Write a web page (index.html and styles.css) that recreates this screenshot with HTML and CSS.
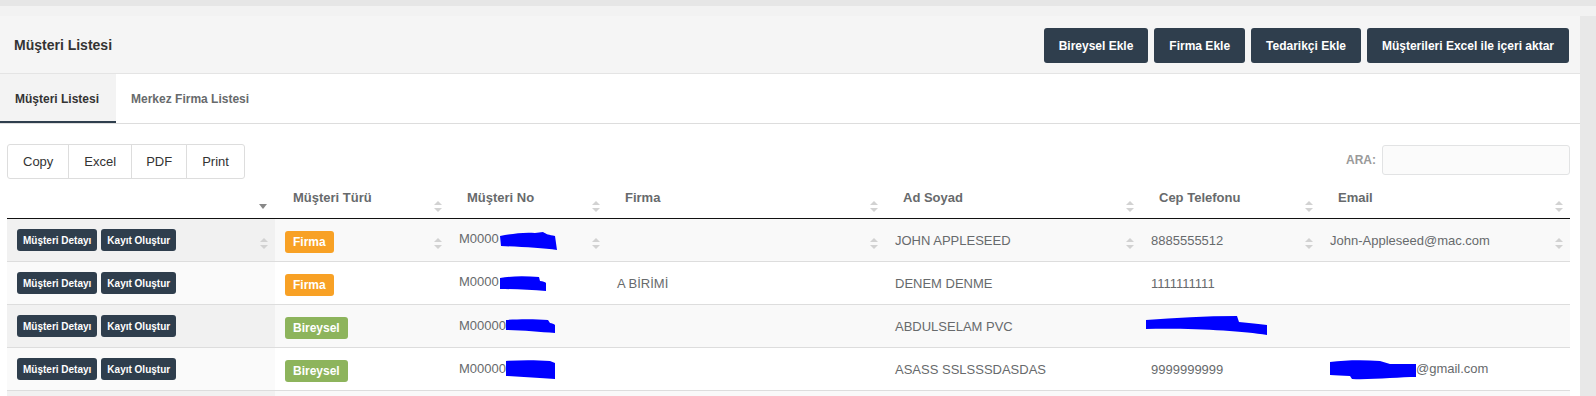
FILE: index.html
```html
<!DOCTYPE html>
<html lang="tr">
<head>
  <meta charset="UTF-8">
  <title>Müşteri Listesi</title>
  <link rel="stylesheet" href="styles.css">
</head>
<body>
  <div class="topbar"></div>
  <div class="page">
    <div class="panel-head">
      <h5 class="panel-title">Müşteri Listesi</h5>
      <div class="head-actions">
        <button class="btn-dark">Bireysel Ekle</button>
        <button class="btn-dark">Firma Ekle</button>
        <button class="btn-dark">Tedarikçi Ekle</button>
        <button class="btn-dark">Müşterileri Excel ile içeri aktar</button>
      </div>
    </div>

    <!-- sekmeler -->
    <div class="tabs">
      <a class="tab active">Müşteri Listesi</a>
      <a class="tab">Merkez Firma Listesi</a>
    </div>

    <div class="content">
      <div class="tools">
        <div class="export-group">
          <button class="btn-export">Copy</button>
          <button class="btn-export">Excel</button>
          <button class="btn-export">PDF</button>
          <button class="btn-export">Print</button>
        </div>
        <label class="search">ARA: <input type="text" class="search-input"></label>
      </div>

      <table class="data-table">
        <colgroup>
          <col style="width: 268px">
          <col style="width: 174px">
          <col style="width: 158px">
          <col style="width: 278px">
          <col style="width: 256px">
          <col style="width: 179px">
          <col style="width: 250px">
        </colgroup>
        <thead>
          <tr>
            <th><span class="sort-desc"></span></th>
            <th>Müşteri Türü<span class="sort"></span></th>
            <th>Müşteri No<span class="sort"></span></th>
            <th>Firma<span class="sort"></span></th>
            <th>Ad Soyad<span class="sort"></span></th>
            <th>Cep Telefonu<span class="sort"></span></th>
            <th>Email<span class="sort"></span></th>
          </tr>
        </thead>
        <tbody>
          <tr class="odd with-sort">
            <td class="first"><button class="btn-xs">Müşteri Detayı</button><button class="btn-xs">Kayıt Oluştur</button><span class="sort"></span></td>
            <td><span class="badge badge-firma">Firma</span><span class="sort"></span></td>
            <td>M0000<svg class="blob" width="60" height="22" viewBox="0 0 60 22"><path d="M1 7 C12 5 24 3 36 4 L44 3 C47 5 50 6 56 7 L58 21 C44 19 22 18 2 17 Z" fill="#0000ff"/></svg><span class="sort"></span></td>
            <td><span class="sort"></span></td>
            <td>JOHN APPLESEED<span class="sort"></span></td>
            <td>8885555512<span class="sort"></span></td>
            <td>John-Appleseed@mac.com<span class="sort"></span></td>
          </tr>
          <tr class="even">
            <td class="first"><button class="btn-xs">Müşteri Detayı</button><button class="btn-xs">Kayıt Oluştur</button></td>
            <td><span class="badge badge-firma">Firma</span></td>
            <td>M0000<svg class="blob" width="48" height="17" viewBox="0 0 48 17"><path d="M1 3 C12 1 26 1 40 2 L41 6 C44 6 46 7 47 8 L47 16 C32 15 16 14 1 14 Z" fill="#0000ff"/></svg></td>
            <td>A BİRİMİ</td>
            <td>DENEM DENME</td>
            <td>1111111111</td>
            <td></td>
          </tr>
          <tr class="odd">
            <td class="first"><button class="btn-xs">Müşteri Detayı</button><button class="btn-xs">Kayıt Oluştur</button></td>
            <td><span class="badge badge-bireysel">Bireysel</span></td>
            <td>M00000<svg class="blob" width="50" height="16" viewBox="0 0 50 16"><path d="M0 2 C12 1 30 1 42 2 L44 5 C46 5 48 6 49 7 L49 15 C34 14 16 12 0 12 Z" fill="#0000ff"/></svg></td>
            <td></td>
            <td>ABDULSELAM PVC</td>
            <td><svg class="blob blob-phone" width="124" height="22" viewBox="0 0 124 22"><path d="M1 5 C30 3 60 1 92 1 L94 7 C104 8 114 9 122 10 L122 20 C96 16 50 13 1 14 Z" fill="#0000ff"/></svg></td>
            <td></td>
          </tr>
          <tr class="even">
            <td class="first"><button class="btn-xs">Müşteri Detayı</button><button class="btn-xs">Kayıt Oluştur</button></td>
            <td><span class="badge badge-bireysel">Bireysel</span></td>
            <td>M00000<svg class="blob" width="50" height="21" viewBox="0 0 50 21"><path d="M0 2 C14 1 30 1 44 2 L49 4 L49 20 C34 19 16 18 0 17 Z" fill="#0000ff"/></svg></td>
            <td></td>
            <td>ASASS SSLSSSDASDAS</td>
            <td>9999999999</td>
            <td><svg class="blob" width="86" height="21" viewBox="0 0 86 21"><path d="M0 3 C16 1 34 1 50 2 L60 5 C70 5 78 5 86 5 L86 18 C70 18 40 21 22 20 L20 17 C12 17 6 16 0 16 Z" fill="#0000ff"/></svg>@gmail.com</td>
          </tr>
          <tr class="odd">
            <td class="first"></td><td></td><td></td><td></td><td></td><td></td><td></td>
          </tr>
        </tbody>
      </table>
    </div>
  </div>
</body>
</html>
```

FILE: styles.css
```css
html, body {
  overflow: hidden;
}

body {
  margin: 0;
  background-color: #e8e8e8;
  font-family: "Liberation Sans", Arial, sans-serif;
  color: #676a6c;
}

.topbar {
  height: 16px;
  background: linear-gradient(#e6e6e6 0, #e6e6e6 6px, #f2f2f2 6px, #f2f2f2 16px);
}

.page {
  width: 1580px;
  background-color: #fff;
  min-height: 400px;
}

.panel-head {
  height: 57px;
  background-color: #f5f5f5;
  border-bottom: 1px solid #e4e4e4;
  display: flex;
  align-items: center;
  justify-content: space-between;
  padding: 0 11px 0 14px;
}

.panel-title {
  margin: 0;
  font-size: 14px;
  font-weight: bold;
  color: #333;
}

.head-actions {
  display: flex;
  gap: 6px;
  padding-top: 2px;
}

.btn-dark {
  height: 35px;
  padding: 0 15px;
  border: none;
  border-radius: 3px;
  background-color: #2f3e4d;
  color: #fff;
  font-family: inherit;
  font-size: 12px;
  font-weight: bold;
}

.tabs {
  display: flex;
  height: 49px;
  border-bottom: 1px solid #ddd;
}

.tab {
  display: flex;
  align-items: center;
  padding: 0 17px 0 15px;
  font-size: 12px;
  font-weight: bold;
  color: #676a6c;
}

.tab.active {
  background-color: #f3f3f3;
  color: #333;
  border-bottom: 2px solid #2f3e4d;
  padding-top: 2px;
}

.content {
  padding: 20px 10px 0 7px;
}

.tools {
  display: flex;
  justify-content: space-between;
  align-items: flex-start;
  height: 35px;
}

.export-group {
  display: flex;
}

.btn-export {
  height: 35px;
  padding: 0 15px;
  background-color: #fff;
  border: 1px solid #ddd;
  margin-left: -1px;
  font-family: inherit;
  font-size: 13px;
  color: #333;
}

.btn-export:first-child {
  margin-left: 0;
  border-radius: 3px 0 0 3px;
}

.btn-export:nth-child(3) {
  padding: 0 14px;
}

.btn-export:last-child {
  padding: 0 15px;
  border-radius: 0 3px 3px 0;
}

.search {
  display: flex;
  align-items: center;
  gap: 6px;
  margin-top: 1px;
  font-size: 12px;
  font-weight: bold;
  color: #9a9a9a;
}

.search-input {
  width: 188px;
  height: 30px;
  box-sizing: border-box;
  border: 1px solid #e2e3e4;
  border-radius: 3px;
  background-color: #fbfbfb;
}

.data-table {
  width: 1563px;
  table-layout: fixed;
  border-collapse: separate;
  border-spacing: 0;
  font-size: 13px;
}

.data-table th {
  position: relative;
  box-sizing: border-box;
  height: 40px;
  padding: 0 18px 2px 18px;
  text-align: left;
  font-weight: bold;
  color: #676a6c;
  border-bottom: 1px solid #111;
  white-space: nowrap;
}

.data-table td {
  position: relative;
  box-sizing: border-box;
  height: 43px;
  padding: 0 10px;
  border-top: 1px solid #ddd;
  white-space: nowrap;
}

.data-table tbody tr:first-child td {
  border-top: none;
  height: 42px;
}

.odd td {
  background-color: #f9f9f9;
}

.odd td.first {
  background-color: #f1f1f1;
}

.even td.first {
  background-color: #fafafa;
}

.btn-xs {
  height: 22px;
  padding: 0 6px;
  margin-right: 4px;
  border: none;
  border-radius: 3px;
  background-color: #2f3e4d;
  color: #fff;
  font-family: inherit;
  font-size: 10px;
  font-weight: bold;
  vertical-align: middle;
}

.badge {
  display: inline-block;
  height: 22px;
  line-height: 22px;
  padding: 0 8px;
  border-radius: 3px;
  color: #fff;
  font-size: 12px;
  font-weight: bold;
  vertical-align: middle;
  margin-top: 3px;
}

.badge-firma {
  background-color: #f8a125;
}

.badge-bireysel {
  background-color: #8db45c;
}

.blob {
  vertical-align: middle;
}

.blob-phone {
  margin-left: -6px;
}

/* ikonlar */
.sort {
  position: absolute;
  right: 7px;
  bottom: 6px;
  width: 8px;
  height: 11px;
}

.sort::before,
.sort::after {
  content: "";
  position: absolute;
  left: 0;
  border-left: 4px solid transparent;
  border-right: 4px solid transparent;
}

.sort::before {
  top: 0;
  border-bottom: 4px solid #d2d2d2;
}

.sort::after {
  bottom: 0;
  border-top: 4px solid #d2d2d2;
}

.with-sort .sort {
  bottom: 12px;
}

.sort-desc {
  position: absolute;
  right: 8px;
  bottom: 9px;
  border-left: 4px solid transparent;
  border-right: 4px solid transparent;
  border-top: 5px solid #888;
}
```
